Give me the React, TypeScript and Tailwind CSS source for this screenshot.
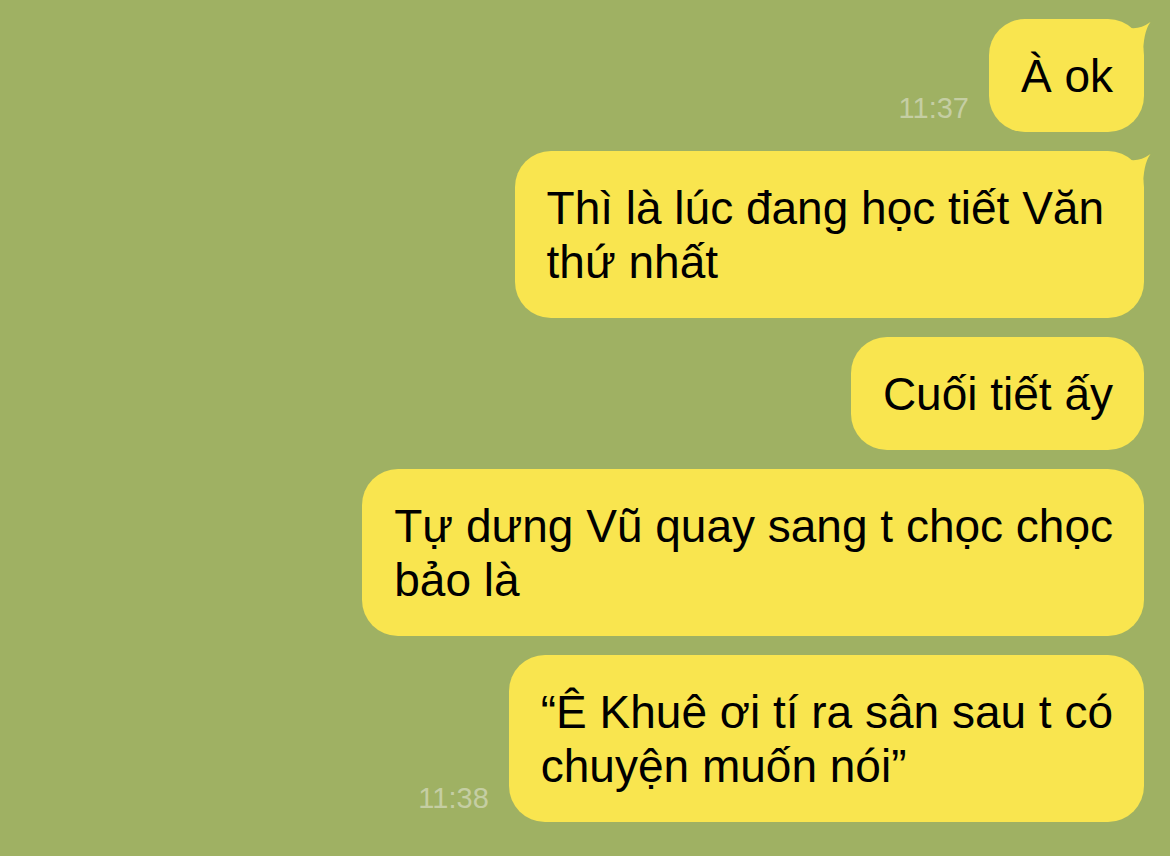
import React from "react";

type Msg = {
  lines: string[];
  time?: string;
  tail?: boolean;
  wide?: boolean;
};

const MESSAGES: Msg[] = [
  { lines: ["À ok"], time: "11:37", tail: true },
  { lines: ["Thì là lúc đang học tiết Văn", "thứ nhất"], tail: true, wide: true },
  { lines: ["Cuối tiết ấy"] },
  { lines: ["Tự dưng Vũ quay sang t chọc chọc", "bảo là"] },
  { lines: ["“Ê Khuê ơi tí ra sân sau t có", "chuyện muốn nói”"], time: "11:38" },
];

// đuôi bong bóng ở góc trên bên phải
function Tail() {
  return (
    <svg
      className="absolute top-0 right-[-9px] w-[30px] h-[40px]"
      viewBox="0 0 30 40"
    >
      <path
        d="M0,14 L3,8 Q15,12 27.5,3 Q20,13 20,38 L0,38 Z"
        fill="#f9e54f"
      />
    </svg>
  );
}

function Bubble({ msg }: { msg: Msg }) {
  return (
    <div className="flex items-end gap-[20px]">
      {msg.time && (
        <span className="mb-[8px] text-[29px] leading-[32px] text-[#c5cea3]">
          {msg.time}
        </span>
      )}
      <div
        className={`relative rounded-[36px] bg-[#f9e54f] pl-[32px] pt-[30px] pb-[29px] ${
          msg.wide ? "pr-[40px]" : "pr-[31px]"
        }`}
      >
        {msg.tail && <Tail />}
        <p className="relative whitespace-nowrap text-[46px] leading-[54px] text-black">
          {msg.lines.map((line, i) => (
            <React.Fragment key={i}>
              {i > 0 && <br />}
              {line}
            </React.Fragment>
          ))}
        </p>
      </div>
    </div>
  );
}

export default function App() {
  return (
    <div
      className="min-h-screen w-full overflow-hidden bg-[#9fb163] flex flex-col items-end gap-[19px] pt-[19px] pr-[26px]"
      style={{ fontFamily: '"Liberation Sans", Arial, sans-serif' }}
    >
      {MESSAGES.map((m, i) => (
        <Bubble key={i} msg={m} />
      ))}
    </div>
  );
}
